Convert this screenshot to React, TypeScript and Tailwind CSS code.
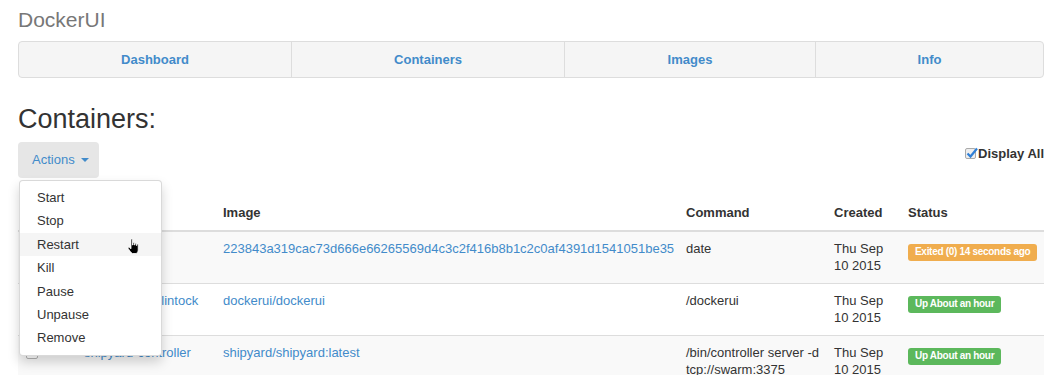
import { useState } from 'react';

type Row = {
  name: string;
  image: string;
  command: string[];
  status: string;
  state: 'exited' | 'up';
};

const rows: Row[] = [
  {
    name: 'tender_bell',
    image: '223843a319cac73d666e66265569d4c3c2f416b8b1c2c0af4391d1541051be35',
    command: ['date'],
    status: 'Exited (0) 14 seconds ago',
    state: 'exited',
  },
  {
    name: 'naughty_mcclintock',
    image: 'dockerui/dockerui',
    command: ['/dockerui'],
    status: 'Up About an hour',
    state: 'up',
  },
  {
    name: 'shipyard-controller',
    image: 'shipyard/shipyard:latest',
    command: ['/bin/controller server -d', 'tcp://swarm:3375'],
    status: 'Up About an hour',
    state: 'up',
  },
];

const actions = ['Start', 'Stop', 'Restart', 'Kill', 'Pause', 'Unpause', 'Remove'];

function HandCursor() {
  return (
    <svg width="14" height="17" viewBox="0 0 14 17" className="absolute left-[107px] top-[5px]">
      <path
        d="M4 1.5c0-.8 1.5-.8 1.5 0V7h.5V5.2c0-.8 1.4-.8 1.4 0V7h.5V5.8c0-.8 1.4-.8 1.4 0V7.5h.5V6.6c0-.8 1.4-.8 1.4 0V12c0 1.5-.8 3-2 3.5H5.5C4.3 15 2.5 12.5 1.2 10.5c-.5-.8.4-1.6 1.2-1L4 10.8z"
        fill="#000"
        stroke="#fff"
        strokeWidth="0.8"
      />
    </svg>
  );
}

function Badge({ state, children }: { state: Row['state']; children: string }) {
  return (
    <span
      className={
        'inline-block whitespace-nowrap rounded-[3px] px-[7px] pt-[2px] pb-[3px] text-[10px] font-bold leading-[12px] tracking-[-0.3px] text-white ' +
        (state === 'exited' ? 'bg-[#f0ad4e]' : 'bg-[#5cb85c]')
      }
    >
      {children}
    </span>
  );
}

function RowCheck() {
  return <span className="mt-[3px] inline-block h-[12px] w-[12px] rounded-[2px] border border-[#b5b5b5] bg-white" />;
}

export default function App() {
  const [open] = useState(true);
  const [displayAll, setDisplayAll] = useState(true);

  return (
    <div className="min-h-[375px] bg-white px-[18px] pr-[19px] font-['Liberation_Sans',Arial,sans-serif] text-[13px] text-[#333]">
      <div className="pt-[7px] text-[21px] leading-[26px] text-[#777]">DockerUI</div>

      <nav className="mt-[8px] grid h-[37px] grid-cols-[273px_273px_251px_1fr] rounded-[4px] border border-[#ddd] bg-[#f5f5f5] text-[13px] font-bold text-[#428bca]">
        <a className="flex items-center justify-center border-r border-[#ddd]">Dashboard</a>
        <a className="flex items-center justify-center border-r border-[#ddd]">Containers</a>
        <a className="flex items-center justify-center border-r border-[#ddd]">Images</a>
        <a className="flex items-center justify-center">Info</a>
      </nav>

      <h2 className="mt-[25px] text-[27px] leading-[33px] text-[#333]">Containers:</h2>

      <div className="mt-[6px] flex items-start justify-between">
        <div className="relative">
          <button className="flex h-[36px] w-[81px] items-center gap-[6px] rounded-[4px] bg-[#e6e6e6] pl-[14px] text-[13px] text-[#428bca]">
            Actions
            <span className="h-0 w-0 border-x-[4px] border-t-[4px] border-x-transparent border-t-[#428bca]" />
          </button>
          {open && (
            <ul className="absolute left-[1px] top-[calc(100%+2px)] z-10 w-[143px] rounded-[4px] border border-[rgba(0,0,0,0.15)] bg-white py-[5px] shadow-[0_6px_12px_rgba(0,0,0,0.175)]">
              {actions.map(a => (
                <li
                  key={a}
                  className={
                    'relative px-[17px] py-[3px] leading-[17.4px] text-[#333] ' + (a === 'Restart' ? 'bg-[#f5f5f5]' : '')
                  }
                >
                  {a}
                  {a === 'Restart' && <HandCursor />}
                </li>
              ))}
            </ul>
          )}
        </div>

        <label
          className="mt-[2px] flex cursor-pointer items-center text-[13px] font-bold text-[#333]"
          onClick={() => setDisplayAll(!displayAll)}
        >
          <span className="relative mr-[2px] inline-block h-[11px] w-[11px] rounded-[2px] border border-[#aaa] bg-[#eee]">
            {displayAll && (
              <svg viewBox="0 0 12 12" className="absolute -top-[2px] left-[0px] h-[12px] w-[12px]">
                <path d="M1.5 6.5 4.5 9.5 11 1.5" fill="none" stroke="#2f7fd6" strokeWidth="2.2" />
              </svg>
            )}
          </span>
          Display All
        </label>
      </div>

      <table className="mt-[18px] w-full table-fixed border-collapse text-left leading-[17.5px]">
        <colgroup>
          <col className="w-[58px]" />
          <col className="w-[139px]" />
          <col className="w-[463px]" />
          <col className="w-[148px]" />
          <col className="w-[74px]" />
          <col />
        </colgroup>
        <thead>
          <tr className="border-b-2 border-[#ddd]">
            <th className="p-[8px] font-bold"></th>
            <th className="p-[8px] font-bold">Name</th>
            <th className="p-[8px] font-bold">Image</th>
            <th className="p-[8px] font-bold">Command</th>
            <th className="p-[8px] font-bold">Created</th>
            <th className="p-[8px] font-bold">Status</th>
          </tr>
        </thead>
        <tbody>
          {rows.map((r, i) => (
            <tr key={r.name} className={'border-t border-[#ddd] align-top ' + (i % 2 === 0 ? 'bg-[#f9f9f9]' : 'bg-white')}>
              <td className="p-[8px]">
                <RowCheck />
              </td>
              <td className="whitespace-nowrap p-[8px] text-[#428bca]">{r.name}</td>
              <td className="whitespace-nowrap p-[8px] text-[#428bca]">{r.image}</td>
              <td className="p-[8px]">
                {r.command.map(c => (
                  <div key={c} className="whitespace-nowrap">
                    {c}
                  </div>
                ))}
              </td>
              <td className="p-[8px]">
                <div>Thu Sep</div>
                <div>10 2015</div>
              </td>
              <td className="p-[8px] pt-[10px]">
                <Badge state={r.state}>{r.status}</Badge>
              </td>
            </tr>
          ))}
        </tbody>
      </table>
    </div>
  );
}
